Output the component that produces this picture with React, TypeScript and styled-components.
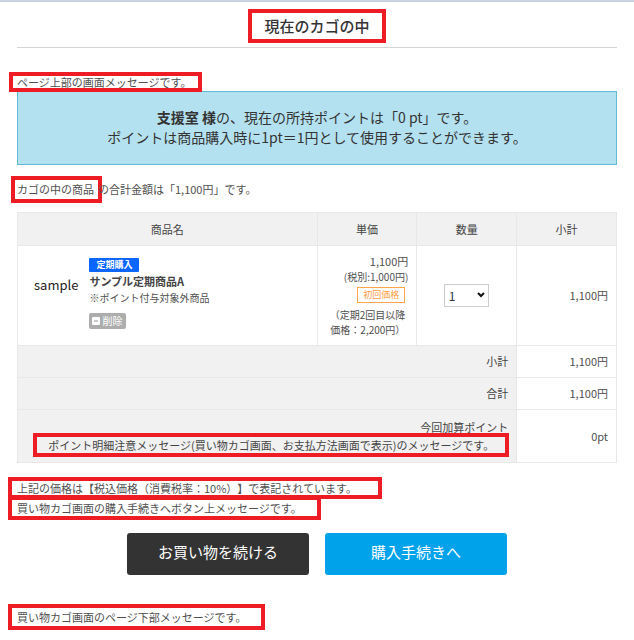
import React, { useState } from "react";
import styled, { createGlobalStyle } from "styled-components";

const GlobalStyle = createGlobalStyle`
  * { box-sizing: border-box; }
  body {
    margin: 0;
    background: #fff;
    color: #505050;
    font-family: "Noto Sans CJK JP", "Noto Sans", sans-serif;
    font-size: 11px;
    line-height: 16px;
    text-spacing-trim: space-all;
  }
  button, select { font-family: inherit; }
`;

const Page = styled.div`
  border-top: 2px solid #c9d3e3;
`;

const Main = styled.main`
  padding: 7px 17px 11px;
`;

const Header = styled.header`
  display: flex;
  justify-content: center;
  padding-bottom: 4px;
  border-bottom: 1px solid #d5d5d5;
`;

const Title = styled.h1`
  margin: 0;
  padding: 0 12px;
  border: 4px solid #ee1c25;
  color: #333;
  font-size: 15px;
  font-weight: 500;
  line-height: 26px;
`;

const Message = styled.p<{ $top: number }>`
  display: flex;
  margin: ${(p) => p.$top}px 0 0;
`;

const Callout = styled.span<{ $line: number; $left: number; $right: number }>`
  display: block;
  margin-left: -${(p) => p.$left}px;
  padding: 0 ${(p) => p.$right}px 0 ${(p) => p.$left}px;
  outline: 4px solid #ee1c25;
  line-height: ${(p) => p.$line}px;
  white-space: nowrap;
`;

const PointNotice = styled.section`
  margin-top: 3px;
  padding: 15px 16px 17px;
  border: 1px solid #5ebad6;
  background: #b4e1f0;
  color: #333;
  font-size: 14px;
  line-height: 20px;
  text-align: center;

  strong { font-weight: 700; }
`;

const Summary = styled(Message)`
  line-height: 19px;
`;

const CartTable = styled.table`
  width: 100%;
  margin-top: 13px;
  border-collapse: collapse;
  table-layout: fixed;
`;

const Column = styled.col<{ $share: string }>`
  width: ${(p) => p.$share};
`;

const HeadCell = styled.th`
  padding: 8px;
  border: 1px solid #e8e8e8;
  background: #f1f1f1;
  color: #444;
  font-weight: 400;
`;

const Cell = styled.td<{ $align?: string }>`
  padding: 7px 8px 8px;
  border: 1px solid #e8e8e8;
  text-align: ${(p) => p.$align || "right"};
`;

const TotalLabel = styled(HeadCell)`
  padding: 7px 8px 8px;
  text-align: right;
`;

const PointLabel = styled(TotalLabel)`
  padding: 8px;
  line-height: 18px;
`;

const TotalNote = styled.div`
  display: flex;
  justify-content: flex-end;
  padding: 1px 3px 1px 0;
`;

const TotalCallout = styled(Callout)`
  margin-left: 0;
`;

const ProductCell = styled(Cell)`
  padding: 12px 8px 15px 16px;
  vertical-align: top;
`;

const Product = styled.div`
  display: flex;
  align-items: flex-start;
  gap: 11px;
`;

const Thumbnail = styled.div`
  padding-top: 17px;
  color: #222;
  font-size: 13px;
  line-height: 20px;
`;

const ProductInfo = styled.div`
  display: flex;
  flex-direction: column;
  align-items: flex-start;
`;

const SubscriptionBadge = styled.span`
  padding: 0 7px;
  border-radius: 1px;
  background: #0a66ff;
  color: #fff;
  font-size: 9px;
  font-weight: 700;
  line-height: 14px;
`;

const ProductName = styled.strong`
  color: #444;
  font-weight: 700;
  line-height: 18px;
`;

const Small = styled.span`
  display: block;
  font-size: 10px;
`;

const DeleteButton = styled.button`
  display: flex;
  align-items: center;
  gap: 2px;
  height: 16px;
  margin-top: 7px;
  padding: 0 4px 0 3px;
  border: 0;
  border-radius: 2px;
  background: #adadad;
  color: #fff;
  font-size: 10px;
  line-height: 16px;
  cursor: pointer;
`;

const FirstPrice = styled.span`
  display: block;
  width: fit-content;
  margin: 2px 3px 4px auto;
  padding: 0 5px;
  border: 1px solid #ffa64d;
  color: #ff9a3c;
  font-size: 9px;
  line-height: 14px;
`;

const LaterPrice = styled(Small)`
  padding-right: 3px;
  line-height: 15px;
  white-space: nowrap;
`;

const QuantityBox = styled.label`
  display: inline-grid;
  align-items: center;
  margin-right: 1px;

  select, svg { grid-area: 1 / 1; }
  svg { justify-self: end; margin-right: 4px; pointer-events: none; }
`;

const QuantitySelect = styled.select`
  width: 45px;
  height: 23px;
  padding: 0 4px;
  border: 1px solid #ccc;
  border-radius: 0;
  appearance: none;
  background: #fff;
  color: #333;
  font-size: 12px;
`;

const Actions = styled.div`
  display: flex;
  justify-content: center;
  gap: 16px;
  margin-top: 17px;
`;

const ActionButton = styled.button<{ $primary?: boolean }>`
  flex: 0 1 182px;
  height: 42px;
  padding: 0 0 4px;
  border: 0;
  border-radius: 3px;
  background: ${(p) => (p.$primary ? "#00a2ea" : "#333")};
  color: #fff;
  font-size: 15px;
  line-height: 20px;
  cursor: pointer;
`;

export default function App() {
  const [quantity, setQuantity] = useState("1");

  return (
    <Page>
      <GlobalStyle />
      <Main>
        <Header>
          <Title>現在のカゴの中</Title>
        </Header>

        <Message $top={28}>
          <Callout $line={12} $left={4} $right={7}>
            ページ上部の画面メッセージです。
          </Callout>
        </Message>

        <PointNotice>
          <strong>支援室 様</strong>の、現在の所持ポイントは「0 pt」です。
          <br />
          ポイントは商品購入時に1pt＝1円として使用することができます。
        </PointNotice>

        <Summary $top={15}>
          <Callout $line={19} $left={2} $right={4}>
            カゴの中の商品
          </Callout>
          の合計金額は「1,100円」です。
        </Summary>

        <CartTable>
          <colgroup>
            <Column $share="50%" />
            <Column $share="auto" />
            <Column $share="auto" />
            <Column $share="auto" />
          </colgroup>
          <thead>
            <tr>
              <HeadCell scope="col">商品名</HeadCell>
              <HeadCell scope="col">単価</HeadCell>
              <HeadCell scope="col">数量</HeadCell>
              <HeadCell scope="col">小計</HeadCell>
            </tr>
          </thead>
          <tbody>
            <tr>
              <ProductCell $align="left">
                <Product>
                  <Thumbnail>sample</Thumbnail>
                  <ProductInfo>
                    <SubscriptionBadge>定期購入</SubscriptionBadge>
                    <ProductName>サンプル定期商品A</ProductName>
                    <Small>※ポイント付与対象外商品</Small>
                    <DeleteButton type="button">
                      <svg width="8" height="8" viewBox="0 0 8 8" aria-hidden="true">
                        <rect width="8" height="8" rx="1" fill="#fff" />
                        <path d="M2 4h4" stroke="#999" />
                      </svg>
                      削除
                    </DeleteButton>
                  </ProductInfo>
                </Product>
              </ProductCell>
              <Cell>
                1,100円
                <Small>(税別:1,000円)</Small>
                <FirstPrice>初回価格</FirstPrice>
                <LaterPrice>
                  （定期2回目以降
                  <br />
                  価格：2,200円）
                </LaterPrice>
              </Cell>
              <Cell $align="center">
                <QuantityBox>
                  <QuantitySelect
                    aria-label="数量"
                    value={quantity}
                    onChange={(e) => setQuantity(e.target.value)}
                  >
                    <option>1</option>
                    <option>2</option>
                    <option>3</option>
                  </QuantitySelect>
                  <svg width="8" height="6" viewBox="0 0 8 6" aria-hidden="true">
                    <path d="M1 1l3 3 3-3" fill="none" stroke="#111" strokeWidth="2" />
                  </svg>
                </QuantityBox>
              </Cell>
              <Cell>1,100円</Cell>
            </tr>
            <tr>
              <TotalLabel scope="row" colSpan={3}>小計</TotalLabel>
              <Cell>1,100円</Cell>
            </tr>
            <tr>
              <TotalLabel scope="row" colSpan={3}>合計</TotalLabel>
              <Cell>1,100円</Cell>
            </tr>
            <tr>
              <PointLabel scope="row" colSpan={3}>
                今回加算ポイント
                <TotalNote>
                  <TotalCallout $line={16} $left={11} $right={11}>
                    ポイント明細注意メッセージ(買い物カゴ画面、お支払方法画面で表示)のメッセージです。
                  </TotalCallout>
                </TotalNote>
              </PointLabel>
              <Cell>0pt</Cell>
            </tr>
          </tbody>
        </CartTable>

        <Message $top={18}>
          <Callout $line={14} $left={5} $right={21}>
            上記の価格は【税込価格（消費税率：10%）】で表記されています。
          </Callout>
        </Message>
        <Message $top={5}>
          <Callout $line={16} $left={5} $right={15}>
            買い物カゴ画面の購入手続きへボタン上メッセージです。
          </Callout>
        </Message>

        <Actions>
          <ActionButton type="button">お買い物を続ける</ActionButton>
          <ActionButton type="button" $primary>購入手続きへ</ActionButton>
        </Actions>

        <Message $top={33}>
          <Callout $line={18} $left={5} $right={15}>
            買い物カゴ画面のページ下部メッセージです。
          </Callout>
        </Message>
      </Main>
    </Page>
  );
}
